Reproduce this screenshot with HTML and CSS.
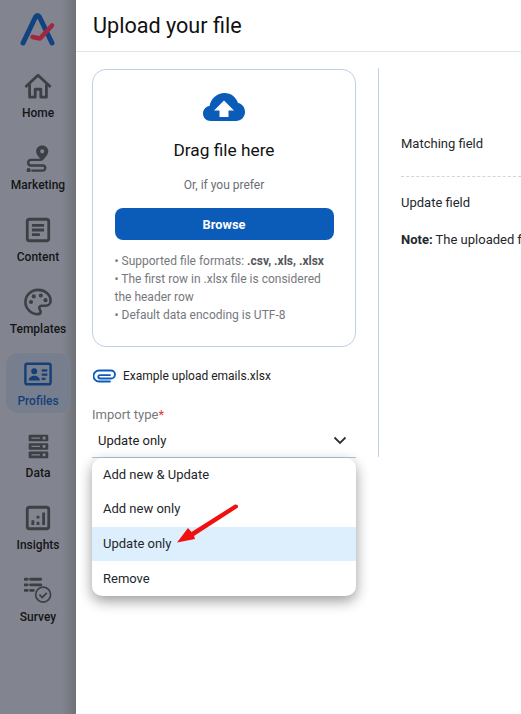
FILE: index.html
```html
<!DOCTYPE html>
<html lang="en">
<head>
    <meta charset="UTF-8">
    <meta name="viewport" content="width=device-width, initial-scale=1.0">
    <title>Upload your file</title>
    <link rel="stylesheet" href="styles.css">
</head>
<body>
    <nav class="sidebar">
        <div class="logo">
            <svg width="36" height="34" viewBox="0 0 36 34" fill="none" stroke-linecap="round" stroke-linejoin="round">
                <path d="M3 31 L15.500 5 Q17.500 2 19.500 5 L32 31" stroke="#10437f" stroke-width="5"/>
                <path d="M12.500 25 L20 26.500 L32 13.500" stroke="#a3263f" stroke-width="4.500"/>
            </svg>
        </div>
        <a class="nav-item">
            <svg width="28" height="28" viewBox="0 0 30 30" fill="none" stroke="#3d3f44" stroke-width="3" stroke-linejoin="round">
                <path d="M1.500 16 L15 3.500 L28.500 16"/>
                <path d="M6 13 V27 H12 V18.500 H18 V27 H24 V13"/>
            </svg>
            <span>Home</span>
        </a>
        <a class="nav-item">
            <svg width="28" height="28" viewBox="0 0 30 30" fill="none" stroke="#3d3f44" stroke-width="2.600" stroke-linecap="round">
                <path fill="#3d3f44" stroke="none" fill-rule="evenodd" d="M19.500 1.500c-3.800 0-6.500 2.800-6.500 6.200 0 3.800 4.300 7.800 6.500 10.300 2.200-2.500 6.500-6.500 6.500-10.300 0-3.400-2.700-6.200-6.500-6.200zm0 4.200a2.200 2.200 0 1 1 0 4.400 2.200 2.200 0 0 1 0-4.400z"/>
                <path d="M18 17H7.500a3 3 0 0 0 0 6H20a2.500 2.500 0 0 1 0 5.500H9"/>
                <circle cx="5" cy="28" r="1.500" fill="#3d3f44" stroke-width="1.500"/>
            </svg>
            <span>Marketing</span>
        </a>
        <a class="nav-item">
            <svg width="28" height="28" viewBox="0 0 30 30" fill="none" stroke="#3d3f44" stroke-width="3">
                <rect x="3.500" y="3.500" width="23" height="23" rx="2.500"/>
                <path d="M8.500 10H21.500M8.500 15H21.500M8.500 20H17"/>
            </svg>
            <span>Content</span>
        </a>
        <a class="nav-item">
            <svg width="28" height="28" viewBox="0 0 30 30" fill="none" stroke="#3d3f44" stroke-width="2.800">
                <path d="M15 2C7.800 2 1.500 7.800 1.500 15S7.800 28 15 28c1.800 0 2.800-1.200 2.800-2.600 0-1.700-1.400-2.300-1.400-3.900 0-1.500 1.200-2.500 2.800-2.500h3.500c3.500 0 5.800-2.200 5.800-5.200C28.500 7 22.500 2 15 2z"/>
                <g fill="#3d3f44" stroke="none">
                    <circle cx="7.500" cy="15" r="2.200"/>
                    <circle cx="10.500" cy="9" r="2.200"/>
                    <circle cx="18" cy="8" r="2.200"/>
                    <circle cx="23" cy="13" r="2.200"/>
                </g>
            </svg>
            <span>Templates</span>
        </a>
        <a class="nav-item active">
            <svg width="28" height="28" viewBox="0 0 30 30" fill="none" stroke="#143f78" stroke-width="2.600">
                <rect x="1.500" y="4" width="27" height="22" rx="2"/>
                <g fill="#143f78" stroke="none">
                    <circle cx="11" cy="12" r="3.200"/>
                    <path d="M5 22c0-3.300 3.300-5 6-5s6 1.700 6 5z"/>
                    <rect x="19" y="10" width="6" height="2.400"/>
                    <rect x="19" y="14.500" width="6" height="2.400"/>
                    <rect x="19" y="19" width="4" height="2.400"/>
                </g>
            </svg>
            <span>Profiles</span>
        </a>
        <a class="nav-item">
            <svg width="28" height="28" viewBox="0 0 30 30" fill="#3d3f44">
                <path fill-rule="evenodd" d="M6 3h19a1 1 0 0 1 1 1v5a1 1 0 0 1-1 1H6a1 1 0 0 1-1-1V4a1 1 0 0 1 1-1zm2 2.800v1.400h9V5.800zm12-.8v3h3V5z"/>
                <path fill-rule="evenodd" d="M6 12h19a1 1 0 0 1 1 1v5a1 1 0 0 1-1 1H6a1 1 0 0 1-1-1v-5a1 1 0 0 1 1-1zm2 2.800v1.400h9v-1.400zm12-.8v3h3v-3z"/>
                <path fill-rule="evenodd" d="M6 21h19a1 1 0 0 1 1 1v5a1 1 0 0 1-1 1H6a1 1 0 0 1-1-1v-5a1 1 0 0 1 1-1zm2 2.800v1.400h9v-1.400zm12-.8v3h3v-3z"/>
            </svg>
            <span>Data</span>
        </a>
        <a class="nav-item">
            <svg width="28" height="28" viewBox="0 0 30 30" fill="none" stroke="#3d3f44" stroke-width="3">
                <rect x="3.500" y="3.500" width="23" height="23" rx="2.500"/>
                <path d="M9.500 22.500v-5M15 22.500v-3.500M15 15.500v-3M21 22.500V9" stroke-width="3"/>
            </svg>
            <span>Insights</span>
        </a>
        <a class="nav-item">
            <svg width="28" height="28" viewBox="0 0 30 30" fill="none" stroke="#3d3f44">
                <path d="M1 3.500h2.500M7 3.500h11M1 9.500h2.500M7 9.500h11M1 15.500h2.500M7 15.500h3" stroke-width="3" stroke-linecap="round"/>
                <circle cx="20.500" cy="20" r="8" stroke-width="1.800"/>
                <path d="M16.500 20l3 3 5-5" stroke-width="1.800"/>
            </svg>
            <span>Survey</span>
        </a>
    </nav>

    <main class="main">
        <header class="page-header">
            <h1>Upload your file</h1>
        </header>
        <div class="content">
            <section class="left-col">
                <div class="upload-box">
                    <svg class="cloud" width="44" height="30" viewBox="0 0 44 30">
                        <path fill="#0a5cb8" d="M9 29C4 29 1 25.500 1 21.500 1 17.500 4 14.500 7.500 14 9 6.500 15 1 22.500 1 29 1 34 5 36 11c4 .5 7 4.500 7 9 0 5-4 9-9 9z"/>
                        <path fill="#fff" d="M22 8.500L32 18.500H26.500V25H17.500V18.500H12z"/>
                    </svg>
                    <div class="drag-title">Drag file here</div>
                    <div class="prefer">Or, if you prefer</div>
                    <button type="button" class="browse">Browse</button>
                    <div class="hints">
                        • Supported file formats: <b>.csv, .xls, .xlsx</b><br>
                        • The first row in .xlsx file is considered the header row<br>
                        • Default data encoding is UTF-8
                    </div>
                </div>
                <div class="example">
                    <svg width="24" height="14" viewBox="0 0 24 14" fill="none" stroke="#0a5cb8" stroke-width="1.800" stroke-linecap="round">
                        <path d="M17 12.500H6a5.500 5.500 0 0 1 0-11H18a4 4 0 0 1 0 8H7a1.700 1.700 0 0 1 0-3.400H17"/>
                    </svg>
                    <span>Example upload emails.xlsx</span>
                </div>
                <div class="field-label">Import type<span class="req">*</span></div>
                <div class="select">
                    <span>Update only</span>
                    <svg width="14" height="9" viewBox="0 0 14 9" fill="none" stroke="#333" stroke-width="1.800">
                        <path d="M1.500 1.500L7 7l5.500-5.500"/>
                    </svg>
                </div>
            </section>
            <section class="right-col">
                <div class="map-row first">Matching field</div>
                <div class="map-row second">Update field</div>
                <p class="note"><b>Note:</b> The uploaded file must contain the matching field column</p>
            </section>
        </div>
    </main>

    <ul class="dropdown">
        <li>Add new &amp; Update</li>
        <li>Add new only</li>
        <li class="selected">Update only</li>
        <li>Remove</li>
    </ul>
    <svg class="arrow" width="64" height="48" viewBox="0 0 64 48">
        <path fill="#f01010" d="M1 39.500L12 25l3.500 4L59 1.500Q62.500 1 62 4.500L18 33 19 36z"/>
    </svg>
</body>
</html>
```

FILE: styles.css
```css
* {
    box-sizing: border-box;
}

body {
    margin: 0;
    height: 714px;
    display: flex;
    overflow: hidden;
    font-family: 'Roboto', sans-serif;
    background-color: #fff;
    color: #1d1d1f;
}

.sidebar {
    width: 76px;
    flex-shrink: 0;
    display: flex;
    flex-direction: column;
    align-items: center;
    background: linear-gradient(to right, #82858f 0, #82858f 62px, #6f7278 76px);
}

.logo {
    height: 63px;
    padding-top: 12px;
}

.nav-item {
    width: 65px;
    height: 62px;
    margin-bottom: 10px;
    display: flex;
    flex-direction: column;
    align-items: center;
    justify-content: flex-end;
    padding-bottom: 5px;
    gap: 6px;
    border-radius: 12px;
    font-size: 12px;
    font-weight: 500;
    color: #141518;
}

.nav-item svg {
    margin-right: 1px;
}

.nav-item.active {
    height: 60px;
    margin-top: 2px;
    background-color: #777f8f;
    color: #143f78;
}

.main {
    flex: 1;
    min-width: 0;
}

.page-header {
    height: 52px;
    padding: 13px 0 0 17px;
    border-bottom: 1px solid #e4e5e8;
}

.page-header h1 {
    margin: 0;
    font-size: 21.6px;
    line-height: 26px;
    font-weight: 400;
    color: #111;
}

.content {
    display: flex;
    padding: 17px 0 0 16px;
}

.left-col {
    width: 264px;
    flex-shrink: 0;
}

.upload-box {
    height: 278px;
    padding: 22px 22px 0;
    border: 1px solid #bcd0e6;
    border-radius: 14px;
    display: flex;
    flex-direction: column;
    align-items: center;
}

.drag-title {
    margin-top: 17px;
    font-size: 17.3px;
    line-height: 22px;
    color: #111;
}

.prefer {
    margin-top: 16px;
    font-size: 12px;
    line-height: 16px;
    color: #6b6e75;
}

.browse {
    width: 219px;
    height: 32px;
    margin-top: 15px;
    border: none;
    border-radius: 8px;
    background-color: #0a5cb8;
    color: #fff;
    font-family: inherit;
    font-size: 12.8px;
    font-weight: 700;
}

.hints {
    width: 219px;
    margin-top: 12px;
    font-size: 12px;
    line-height: 18px;
    color: #76787e;
}

.hints b {
    color: #55575c;
}

.example {
    margin-top: 20px;
    padding-left: 1px;
    display: flex;
    align-items: center;
    gap: 6px;
    font-size: 12px;
    line-height: 18px;
    color: #222;
}

.field-label {
    margin-top: 22px;
    font-size: 13px;
    line-height: 16px;
    color: #76787e;
}

.req {
    color: #e53935;
}

.select {
    height: 35px;
    display: flex;
    align-items: center;
    justify-content: space-between;
    padding: 0 9px 0 6px;
    border-bottom: 1px solid #a9c6e8;
    font-size: 13px;
    color: #222;
}

.right-col {
    width: 143px;
    height: 389px;
    margin-top: -1px;
    margin-left: 22px;
    padding-left: 22px;
    border-left: 1px solid #bcd0e6;
    font-size: 13px;
    line-height: 18px;
    color: #24272c;
    white-space: nowrap;
}

.map-row.first {
    margin-top: 67px;
    height: 42px;
    border-bottom: 1px dashed #d3d5da;
}

.map-row.second {
    margin-top: 17px;
}

.note {
    margin: 19px 0 0;
}

.dropdown {
    position: absolute;
    left: 92px;
    top: 458px;
    width: 264px;
    height: 138px;
    margin: 0;
    padding: 0;
    list-style: none;
    overflow: hidden;
    background-color: #fff;
    border-radius: 10px;
    box-shadow: 0 5px 14px rgba(0, 0, 0, 0.4);
    font-size: 13px;
    color: #24272c;
}

.dropdown li {
    height: 34px;
    line-height: 33px;
    padding-left: 11px;
}

.dropdown li:first-child {
    height: 35px;
}

.dropdown li:nth-child(2) {
    height: 34px;
    line-height: 31px;
}

.dropdown li:last-child {
    line-height: 35px;
}

.dropdown li.selected {
    background-color: #ddeefc;
}

.arrow {
    position: absolute;
    left: 176px;
    top: 503px;
}
```
